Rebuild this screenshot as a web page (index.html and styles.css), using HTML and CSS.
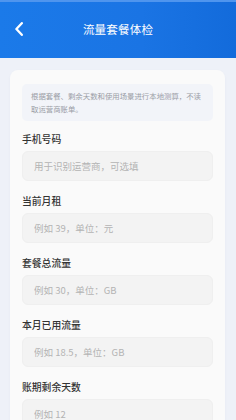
FILE: index.html
```html
<!DOCTYPE html>
<html lang="zh-CN">

<head>
    <meta charset="UTF-8">
    <meta name="viewport" content="width=device-width, initial-scale=1.0">
    <title>流量套餐体检</title>
    <link rel="stylesheet" href="styles.css">
</head>

<body>
    <!-- Top bar -->
    <header class="top-bar">
        <button type="button" class="back-button" aria-label="返回">
            <svg width="10" height="14" viewBox="0 0 10 14">
                <path d="M7.8 1.2 L2.4 7 L7.8 12.8" fill="none" stroke="#fff" stroke-width="2.3" stroke-linecap="round" stroke-linejoin="round" />
            </svg>
        </button>
        <h1 class="top-title">流量套餐体检</h1>
    </header>

    <main class="page">
        <div class="check-card">
            <p class="note">根据套餐、剩余天数和使用场景进行本地测算，不读取运营商账单。</p>

            <form id="checkForm" class="check-form">
                <div class="field">
                    <label for="phone">手机号码</label>
                    <input type="tel" id="phone" placeholder="用于识别运营商，可选填">
                </div>

                <div class="field">
                    <label for="rent">当前月租</label>
                    <input type="number" id="rent" placeholder="例如 39，单位：元">
                </div>

                <div class="field">
                    <label for="total">套餐总流量</label>
                    <input type="number" id="total" placeholder="例如 30，单位：GB">
                </div>

                <div class="field">
                    <label for="used">本月已用流量</label>
                    <input type="number" id="used" placeholder="例如 18.5，单位：GB">
                </div>

                <div class="field">
                    <label for="days">账期剩余天数</label>
                    <input type="number" id="days" placeholder="例如 12">
                </div>
            </form>
        </div>
    </main>
</body>

</html>
```

FILE: styles.css
```css
body {
    font-family: "Noto Sans CJK SC", "Noto Sans", sans-serif;
    margin: 0;
    padding: 0;
    background-color: #eef1f8;
    width: 236px;
    height: 420px;
    overflow: hidden;
}

.top-bar {
    height: 58px;
    background: linear-gradient(90deg, #1b7ae9 0%, #1a74e4 60%, #136bdb 100%);
    border-top: 2px solid #4f95ee;
    box-sizing: border-box;
    display: flex;
    align-items: center;
    justify-content: center;
    position: relative;
}

.back-button {
    position: absolute;
    left: 12px;
    top: 19px;
    background: none;
    border: none;
    padding: 0;
    width: 14px;
    height: 16px;
    display: flex;
    align-items: center;
    justify-content: center;
    cursor: pointer;
}

.top-title {
    margin: 0 0 2px 0;
    font-size: 11.5px;
    font-weight: 400;
    color: #ffffff;
    letter-spacing: 0.2px;
}

.page {
    padding: 12px 11px 0 10px;
}

.check-card {
    background-color: #fafafa;
    border-radius: 8px;
    padding: 14px 12px 12px 12px;
    box-shadow: 0 1px 3px rgba(40, 60, 120, 0.04);
}

.note {
    margin: 0;
    background-color: #f2f4f9;
    border-radius: 5px;
    padding: 5px 8px 6px 9px;
    font-size: 7.4px;
    line-height: 13px;
    color: #9a9da6;
}

.check-form {
    display: flex;
    flex-direction: column;
    gap: 12px;
    margin-top: 10px;
}

.field {
    display: flex;
    flex-direction: column;
    gap: 4px;
}

label {
    font-size: 9.8px;
    line-height: 16px;
    font-weight: 500;
    color: #333333;
}

input {
    font-family: inherit;
    font-size: 9.5px;
    height: 30px;
    box-sizing: border-box;
    padding: 0 11px;
    border: 1px solid #efefef;
    border-radius: 6px;
    background-color: #f3f3f3;
    width: 100%;
    color: #333;
}

input::placeholder {
    color: #b4b4b4;
}

input:focus {
    outline: none;
    border-color: #1a74e4;
}
```
